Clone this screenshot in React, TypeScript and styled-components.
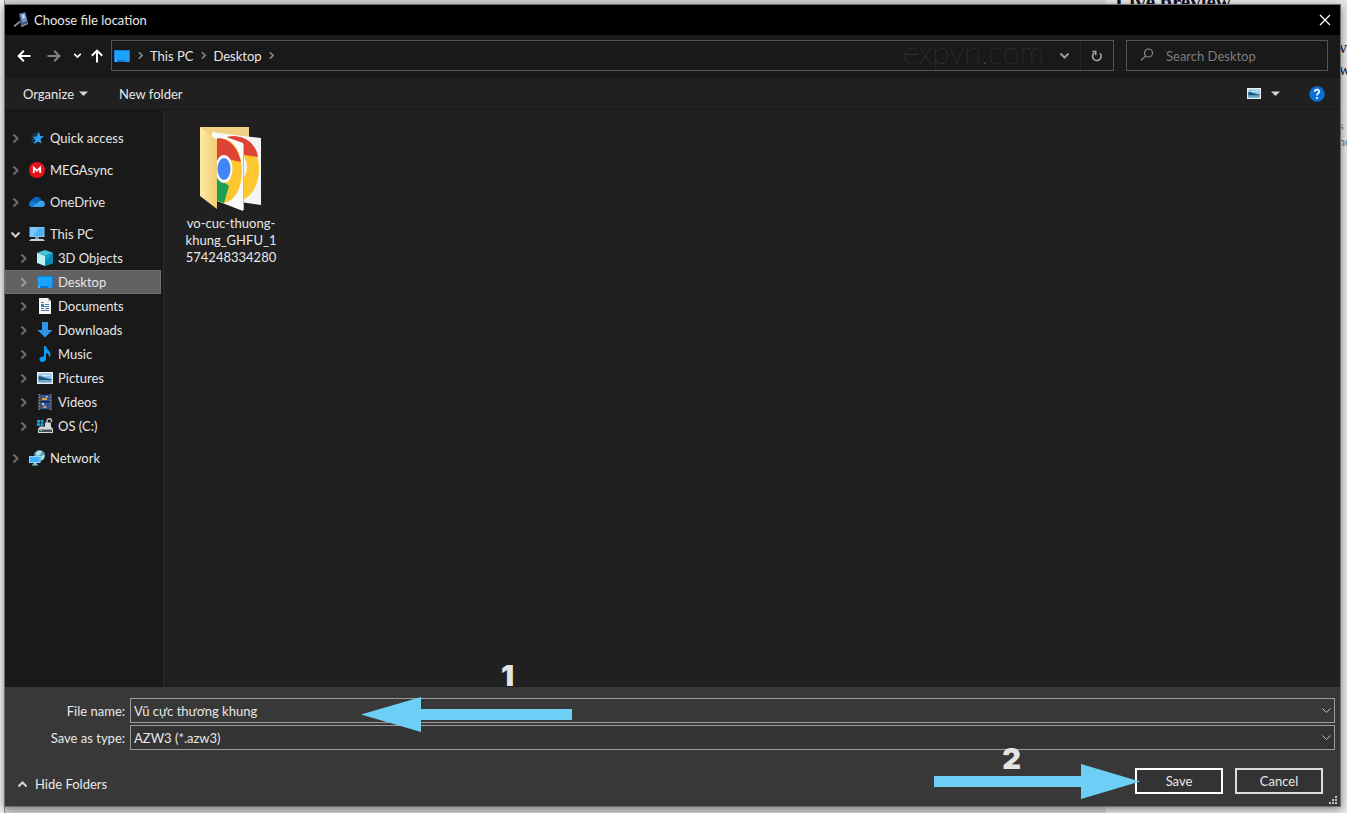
import React from "react";
import styled, { createGlobalStyle, css } from "styled-components";

const GlobalStyle = createGlobalStyle`
  *, *::before, *::after { box-sizing: border-box; }
  html, body { margin: 0; }
  body {
    background: #dedede;
    color: #e8e8e8;
    font: 13px/16px Lato, "Open Sans", sans-serif;
    overflow: hidden;
  }
  button, input, select { font: inherit; color: inherit; margin: 0; }
`;

const Page = styled.div`
  position: relative;
  display: flex;
  min-height: 100vh;
  padding: 4px 6px 6px 4px;
  background: linear-gradient(90deg, #eef0f2 0 4px, #8d8d8d 4px 5px, #d2d2d2 5px 1106px, #e6e6e6 1106px);
`;

const Behind = styled.div`
  position: absolute;
  inset: 0;
  overflow: hidden;
  color: #10101c;
  font-family: "Liberation Serif", serif;
`;

const BehindHeading = styled.strong`
  position: absolute;
  top: -10px;
  right: 116px;
  font: bold 21px/24px "Liberation Serif", serif;
`;

const BehindLine = styled.span<{ $top: number; $tone?: string; $small?: boolean }>`
  position: absolute;
  top: ${(p) => p.$top}px;
  left: calc(100% - 8px);
  color: ${(p) => p.$tone ?? "#10103a"};
  font-size: ${(p) => (p.$small ? 12 : 16)}px;
  line-height: 20px;
  white-space: nowrap;
`;

const Dialog = styled.main`
  position: relative;
  flex: 1;
  min-width: 0;
  display: flex;
  flex-direction: column;
  background: #202020;
  border: 1px solid #6e6e6e;
  box-shadow: 0 2px 8px rgba(0, 0, 0, 0.45);
`;

const TitleBar = styled.header`
  display: flex;
  align-items: center;
  gap: 5px;
  height: 30px;
  padding: 0 8px;
  background: #000;
`;

const Title = styled.h1`
  flex: 1;
  margin: 0;
  font-size: 13px;
  line-height: 16px;
  font-weight: 400;
`;

const IconButton = styled.button<{ $width?: number; $tone?: string }>`
  display: inline-flex;
  align-items: center;
  justify-content: center;
  width: ${(p) => p.$width ?? 24}px;
  height: 24px;
  padding: 0;
  border: 0;
  background: none;
  color: ${(p) => p.$tone ?? "#fff"};
`;

const NavBar = styled.nav`
  display: flex;
  align-items: center;
  height: 43px;
  padding: 0 12px 2px 7px;
  background: #191919;
`;

const AddressBar = styled.div`
  display: flex;
  align-items: center;
  flex: 1;
  height: 31px;
  margin-right: 12px;
  padding-left: 2px;
  border: 1px solid #535353;
`;

const Crumb = styled.a`
  color: #e8e8e8;
  text-decoration: none;
`;

const CrumbGap = styled.span`
  display: inline-flex;
  justify-content: center;
  width: 20px;
  color: #8a8a8a;
`;

const Watermark = styled.span`
  margin-left: auto;
  margin-right: 8px;
  padding-bottom: 8px;
  color: #4a4a4a;
  font-size: 31px;
  line-height: 28px;
  font-weight: 100;
`;

const RefreshSlot = styled.div`
  display: flex;
  align-items: center;
  height: 100%;
  margin-left: 4px;
  padding: 0 4px;
  border-left: 1px solid #242424;
`;

const SearchBox = styled.label`
  display: flex;
  align-items: center;
  gap: 12px;
  width: 202px;
  height: 31px;
  padding: 0 12px;
  border: 1px solid #535353;
  color: #8a8a8a;
`;

const SearchInput = styled.input`
  flex: 1;
  min-width: 0;
  padding: 0;
  border: 0;
  outline: 0;
  background: none;
  &::placeholder { color: #7c7c7c; opacity: 1; }
`;

const ToolBar = styled.div`
  display: flex;
  align-items: center;
  gap: 19px;
  height: 32px;
  padding: 0 14px 0 12px;
  border-bottom: 1px solid #181818;
  background: #202020;
`;

const ToolButton = styled.button`
  display: inline-flex;
  align-items: center;
  gap: 5px;
  height: 24px;
  padding: 0 6px;
  border: 0;
  background: none;
`;

const ToolEnd = styled.div`
  display: flex;
  align-items: center;
  gap: 22px;
  margin-left: auto;
`;

const Body = styled.div`
  display: flex;
  flex: 1;
`;

const Sidebar = styled.aside`
  width: 159px;
  padding: 16px 2px 0 0;
  border-right: 1px solid #2b2b2b;
  background: #191919;
`;

const Group = styled.ul`
  margin: 0 0 8px;
  padding: 0;
  list-style: none;
`;

const TreeRow = styled.li<{ $nested?: boolean; $selected?: boolean }>`
  display: flex;
  align-items: center;
  height: 24px;
  padding-left: ${(p) => (p.$nested ? 12 : 4)}px;
  color: #e6e6e6;
  ${(p) =>
    p.$selected &&
    css`
      background: #616161;
      box-shadow: inset 0 0 0 1px #707070;
    `}
`;

const Twisty = styled.button`
  display: inline-flex;
  align-items: center;
  justify-content: center;
  width: 12px;
  height: 16px;
  margin-right: 8px;
  padding: 0;
  border: 0;
  background: none;
`;

const RowLink = styled.a`
  display: flex;
  align-items: center;
  gap: 5px;
  color: inherit;
  text-decoration: none;
`;

const Files = styled.section`
  display: flex;
  flex: 1;
  flex-wrap: wrap;
  align-content: flex-start;
  padding: 15px;
`;

const FileTile = styled.figure`
  display: flex;
  flex-direction: column;
  align-items: center;
  width: 104px;
  margin: 0;
`;

const FileName = styled.figcaption`
  padding-top: 2px;
  line-height: 17px;
  text-align: center;
`;

const Footer = styled.footer`
  position: relative;
  padding: 11px 5px 10px 5px;
  background: #383838;
`;

const Fields = styled.div`
  display: grid;
  grid-template-columns: 115px 1fr;
  column-gap: 5px;
  row-gap: 2px;
  align-items: center;
`;

const FieldLabel = styled.label`
  text-align: right;
`;

const FieldBox = styled.div<{ $dark?: boolean }>`
  display: grid;
  grid-template-columns: 1fr 16px;
  align-items: center;
  height: 25px;
  border: 1px solid #9b9b9b;
  background: ${(p) => (p.$dark ? "#333" : "#383838")};
`;

const control = css`
  grid-row: 1;
  grid-column: 1 / -1;
  width: 100%;
  height: 23px;
  padding: 0 20px 0 3px;
  border: 0;
  border-radius: 0;
  outline: 0;
  background: none;
  appearance: none;
`;

const TextField = styled.input`${control}`;
const SelectField = styled.select`${control}`;

const FieldArrow = styled.span`
  grid-row: 1;
  grid-column: 2;
  display: flex;
  justify-content: center;
  pointer-events: none;
`;

const Actions = styled.div`
  display: flex;
  align-items: flex-start;
  gap: 12px;
  margin-top: 18px;
  padding: 0 12px 0 1px;
`;

const HideButton = styled(ToolButton)`
  gap: 7px;
  margin-right: auto;
  margin-top: 4px;
`;

const ActionButton = styled.button<{ $primary?: boolean }>`
  width: 88px;
  height: 26px;
  padding: 0;
  border: 2px solid ${(p) => (p.$primary ? "#fff" : "#dcdcdc")};
  background: #333;
`;

const Grip = styled.svg`
  position: absolute;
  right: 2px;
  bottom: 1px;
`;

const Arrow = styled.svg<{ $save?: boolean }>`
  position: absolute;
  pointer-events: none;
  ${(p) => (p.$save ? "right: 200px; top: 77px;" : "left: 356px; top: 10px;")}
`;

const Step = styled.span<{ $save?: boolean }>`
  position: absolute;
  color: #e4e4e4;
  font-family: Inter, Lato, sans-serif;
  font-size: 29px;
  line-height: 32px;
  font-weight: 900;
  pointer-events: none;
  ${(p) => (p.$save ? "right: 319px; top: 56px;" : "left: 496px; top: -27px;")}
`;

type Dir = "right" | "down" | "up";
const chevrons: Record<Dir, string> = {
  right: "M3.5 1.5 7.5 5.5 3.5 9.5",
  down: "M1.5 3.5 5.5 7.5 9.5 3.5",
  up: "M1.5 7.5 5.5 3.5 9.5 7.5",
};

function Chevron({ dir, size = 11, tone = "currentColor", weight = 2 }: { dir: Dir; size?: number; tone?: string; weight?: number }) {
  return (
    <svg width={size} height={size} viewBox="0 0 11 11" fill="none" stroke={tone} strokeWidth={weight} aria-hidden="true">
      <path d={chevrons[dir]} />
    </svg>
  );
}

const Caret = () => (
  <svg width="9" height="6" viewBox="0 0 9 6" aria-hidden="true">
    <path d="M0 .5h9L4.500 5z" fill="#d5d5d5" />
  </svg>
);

const BackArrow = ({ rotate = 0 }: { rotate?: number }) => (
  <svg width="14" height="14" viewBox="0 0 14 14" fill="none" stroke="currentColor" strokeWidth="2" aria-hidden="true">
    <path transform={`rotate(${rotate} 7 7)`} d="M13.500 7H2M6.800 1.800 1.600 7l5.200 5.200" />
  </svg>
);

type IconName =
  | "star" | "mega" | "cloud" | "pc" | "cube" | "desktop" | "doc" | "down"
  | "music" | "picture" | "video" | "drive" | "network";

const drawings: Record<IconName, React.ReactNode> = {
  star: (
    <>
      <path d="m10 1.500 1 4.500 4 .2-3.500 2.800 1 4.500-3.500-2-4.200 2.700L6.500 9.500 3.500 7l4-.5z" fill="#2ba4f5" />
      <path d="M4.500 4h4M2.500 6h4M3 9.500h3M2.500 12h3" stroke="#1b7cc4" strokeWidth=".7" />
    </>
  ),
  mega: (
    <>
      <circle cx="8" cy="8" r="8" fill="#e8121c" />
      <path d="M4.800 11V5.600L8 8.800l3.200-3.200V11" fill="none" stroke="#fff" strokeWidth="1.800" />
    </>
  ),
  cloud: (
    <>
      <path d="M3.800 12.500A3.700 3.700 0 0 1 3 5.400 5 5 0 0 1 12.200 6L9 10z" fill="#0a63b8" />
      <path d="M3 13a3 3 0 0 1-2.800-3.500C1 7.800 3 7.300 5 7.500l6 5z" fill="#1679d2" />
      <path d="M3 13 10.500 7A3.600 3.600 0 0 1 16 10c0 1.800-1.200 3-3 3z" fill="#35a3ee" />
    </>
  ),
  pc: (
    <>
      <path d="M.5 1h15v10H.5z" fill="#8ec9f3" />
      <path d="M1.300 1.800h13.400v8.400H1.300z" fill="#4fb0f6" />
      <path d="M1.300 1.800H10l-6 8.400H1.300z" fill="#7cc8fb" />
      <path d="M6 11h4v2H6z" fill="#83929d" />
      <path d="M2 13h12l2 2H0z" fill="#c3d2dc" />
    </>
  ),
  cube: (
    <>
      <path d="m8 0 8 2.800L8 6 0 2.800z" fill="#43c5dc" />
      <path d="M0 2.800 8 6v10l-8-3z" fill="#b8f4f3" />
      <path d="M8 6l8-3.200V13l-8 3z" fill="#10a9cb" />
      <path d="m8 11 8-8v10l-8 3z" fill="#078db5" />
    </>
  ),
  desktop: (
    <>
      <path d="M0 2h16v12H0z" fill="#0878d4" />
      <path d="M.8 2.800h14.400v9.200H.8z" fill="#1ba1ff" />
      <path d="M1 13h2M11.500 13h1M13.500 13h1" stroke="#b5e1ff" />
    </>
  ),
  doc: (
    <>
      <path d="M2 0h9l3 3v13H2z" fill="#f3f5f6" />
      <path d="M11 0v3h3z" fill="#aab4ba" />
      <path d="M4 4.500h3M8 6.500h4M4 8.500h8M4 10.500h3M8.500 10.500h3.500M4 12.500h8" stroke="#547d99" />
      <path d="M4 6h3v2H4z" fill="#2491cf" />
    </>
  ),
  down: <path d="M5 0h6v8h4.500L8 15.500.5 8H5z" fill="#2e94e8" />,
  music: (
    <path d="M7 0h2c0 3.500 4.500 4.500 4.500 8.500 0 1.600-.8 2.700-1.500 3.500.8-3-1-4.700-3-5v5.500c0 2-1.500 3.500-3.700 3.500C3.700 16 2.500 15 2.500 13.500c0-2 2.200-3.300 4.500-2.800z" fill="#0b9dfc" />
  ),
  picture: (
    <>
      <path d="M0 2h16v12H0z" fill="#eceff2" />
      <path d="M1.500 3.500h13v9h-13z" fill="#8ec5ed" />
      <path d="M1.500 6.500c3-1 4 1.500 13 2.500v1.500h-13z" fill="#1f5578" />
      <path d="M1.500 10h13v2.500h-13z" fill="#6ba7c9" />
      <path d="M5 5.500h8" stroke="#dceffc" />
    </>
  ),
  video: (
    <>
      <path d="M1 0h14v16H1z" fill="#4c4c4c" />
      <path d="M4 0h8v16H4z" fill="#162538" />
      <path d="M4 1h8v6H4zM4 8.500h8V15H4z" fill="#2e55a5" />
      <path d="M5 4h3l2-1v3H5zM6 13l2-2 2 3H6z" fill="#c9a050" />
      <path d="M9 2h2v1H9zM5 9h2v2H5z" fill="#a9d9ff" />
      <path d="M2.500 0v16M13.500 0v16" stroke="#8c8c8c" strokeDasharray="1 2" />
    </>
  ),
  drive: (
    <>
      <path d="M0 2h3v2.500H0zM3.600 2h3v2.500h-3zM0 5.200h3v2.500H0zM3.600 5.200h3v2.500h-3z" fill="#16adef" />
      <path d="M3 8.500h11L16 11v4H1v-4z" fill="#d5d8da" />
      <path d="M2 11.500h13V14H2z" fill="#4d5254" />
      <path d="M3 12h2v1H3z" fill="#50e078" />
      <path d="M10 5V3c0-3 4.500-3 4.500 0v1" fill="none" stroke="#bfc4c8" strokeWidth="1.400" />
      <path d="M8 4.500h6V9H8z" fill="#d3d8db" />
    </>
  ),
  network: (
    <>
      <circle cx="10.500" cy="5.500" r="5.500" fill="#4f9fc2" />
      <path d="M7 2.500C9 .5 12 .5 13 1.500L11 5 7.500 6zM12 6l3.500-1c.3 3-1.500 4.500-3 5.500z" fill="#b9e1e7" />
      <path d="M0 6h11.500v7H0z" fill="#a8dcff" />
      <path d="M.8 6.800h9.900v5.400H.8z" fill="#3bb0fb" />
      <path d="M4.500 13h3v1.500H9v1H3v-1h1.500z" fill="#9bc9e0" />
    </>
  ),
};

const Icon = ({ name, size = 16 }: { name: IconName; size?: number }) => (
  <svg width={size} height={size} viewBox="0 0 16 16" aria-hidden="true">{drawings[name]}</svg>
);

const AppIcon = () => (
  <svg width="16" height="16" viewBox="0 0 16 16" aria-hidden="true">
    <path d="M6 1.500 12.500 0 15 11l-7 3z" fill="#3d5595" />
    <path d="M7 2 12 1l2 8-5 1.500z" fill="#7898c6" />
    <path d="m9 3 2-.5 1 3-2 1z" fill="#d9e4ed" />
    <path d="m8 14 7-3v1l-6.500 3z" fill="#b6bdc6" />
    <path d="m1 14.500 6-5" stroke="#85868a" strokeWidth="2" />
  </svg>
);

const FolderArt = () => (
  <svg width="64" height="88" viewBox="0 0 64 88" role="img" aria-label="Folder">
    <defs>
      <linearGradient id="flap" x1="0" x2="1">
        <stop offset="0" stopColor="#ffe9a8" />
        <stop offset="1" stopColor="#f2ce72" />
      </linearGradient>
      <clipPath id="backSheet"><path d="M28 10 62 14v67L28 74z" /></clipPath>
      <clipPath id="frontSheet"><path d="M18 10 44 18v68L18 76z" /></clipPath>
    </defs>
    <path d="M1 2h49v69H1z" fill="#f0d082" />
    <path d="M13 7 62 13v67L13 73z" fill="#f4f4f4" />
    <g clipPath="url(#backSheet)">
      <ellipse cx="40" cy="44" rx="20" ry="31" fill="#fdc72f" />
      <path d="M28 12C42 8 57 17 59 32L40 29z" fill="#de4436" />
      <ellipse cx="40" cy="42" rx="8" ry="13" fill="#f4f4f4" />
      <ellipse cx="38" cy="42" rx="7" ry="10" fill="#4285f4" />
    </g>
    <path d="M13 7 44 18v68L13 74z" fill="#fafafa" />
    <path d="M44.500 19v66" stroke="#bcbcbc" />
    <g clipPath="url(#frontSheet)">
      <ellipse cx="24" cy="46" rx="19" ry="32" fill="#fdc72f" />
      <path d="M24 46 5 18C24 6 38 18 42 37L24 33z" fill="#de4436" />
      <path d="M3 40 18 52l12 9-5 17C8 74 2 60 3 40z" fill="#1a9f55" />
      <ellipse cx="25" cy="44" rx="8.500" ry="14" fill="#fafafa" />
      <ellipse cx="25" cy="44" rx="6.500" ry="11" fill="#4285f4" />
    </g>
    <path d="M1 2 18 15v69L1 71z" fill="url(#flap)" />
  </svg>
);

interface Place { name: string; icon: IconName; open?: boolean; children?: Place[] }

const places: Place[] = [
  { name: "Quick access", icon: "star" },
  { name: "MEGAsync", icon: "mega" },
  { name: "OneDrive", icon: "cloud" },
  {
    name: "This PC",
    icon: "pc",
    open: true,
    children: [
      { name: "3D Objects", icon: "cube" },
      { name: "Desktop", icon: "desktop" },
      { name: "Documents", icon: "doc" },
      { name: "Downloads", icon: "down" },
      { name: "Music", icon: "music" },
      { name: "Pictures", icon: "picture" },
      { name: "Videos", icon: "video" },
      { name: "OS (C:)", icon: "drive" },
    ],
  },
  { name: "Network", icon: "network" },
];

function PlaceRow({ place, nested }: { place: Place; nested?: boolean }) {
  const selected = nested && place.name === "Desktop";
  return (
    <TreeRow $nested={nested} $selected={selected}>
      <Twisty aria-label={`Expand ${place.name}`}>
        <Chevron dir={place.open ? "down" : "right"} tone={place.open ? "#d0d0d0" : selected ? "#9a9a9a" : "#6f6f6f"} />
      </Twisty>
      <RowLink href="#"><Icon name={place.icon} />{place.name}</RowLink>
    </TreeRow>
  );
}

export default function App() {
  return (
    <>
      <GlobalStyle />
      <Page>
        <Behind aria-hidden="true">
          <BehindHeading>Live preview</BehindHeading>
          <BehindLine $top={38}>v</BehindLine>
          <BehindLine $top={60}>w</BehindLine>
          <BehindLine $top={116} $small $tone="#a0714c">s f</BehindLine>
          <BehindLine $top={132} $small $tone="#70707a">no</BehindLine>
        </Behind>
        <Dialog>
          <TitleBar>
            <AppIcon />
            <Title>Choose file location</Title>
            <IconButton aria-label="Close" $width={14}>
              <svg width="12" height="12" viewBox="0 0 12 12" stroke="#fff" strokeWidth="1.300" aria-hidden="true">
                <path d="m1 1 10 10M11 1 1 11" />
              </svg>
            </IconButton>
          </TitleBar>

          <NavBar aria-label="Location">
            <IconButton aria-label="Back"><BackArrow /></IconButton>
            <IconButton aria-label="Forward" $width={36} $tone="#838383"><BackArrow rotate={180} /></IconButton>
            <IconButton aria-label="Recent locations" $width={11}><Chevron dir="down" size={9} /></IconButton>
            <IconButton aria-label="Up" $width={28}><BackArrow rotate={90} /></IconButton>
            <AddressBar>
              <Icon name="desktop" />
              <CrumbGap><Chevron dir="right" size={9} /></CrumbGap>
              <Crumb href="#">This PC</Crumb>
              <CrumbGap><Chevron dir="right" size={9} /></CrumbGap>
              <Crumb href="#">Desktop</Crumb>
              <CrumbGap><Chevron dir="right" size={9} /></CrumbGap>
              <Watermark>expvn.com</Watermark>
              <IconButton aria-label="Previous locations" $tone="#9b9b9b"><Chevron dir="down" /></IconButton>
              <RefreshSlot>
                <IconButton aria-label="Refresh" $tone="#a5a5a5">
                  <svg width="12" height="12" viewBox="0 0 12 12" fill="none" stroke="currentColor" strokeWidth="1.600" aria-hidden="true">
                    <path d="M3.200 2.800A4.300 4.300 0 1 0 9 3.200M1.500 1.500h3.200v3.700" />
                  </svg>
                </IconButton>
              </RefreshSlot>
            </AddressBar>
            <SearchBox>
              <svg width="15" height="15" viewBox="0 0 15 15" fill="none" stroke="currentColor" strokeWidth="1.200" aria-hidden="true">
                <circle cx="9.500" cy="5" r="4" />
                <path d="M6.600 7.900 2 12.500" />
              </svg>
              <SearchInput type="search" aria-label="Search Desktop" placeholder="Search Desktop" />
            </SearchBox>
          </NavBar>

          <ToolBar>
            <ToolButton>Organize <Caret /></ToolButton>
            <ToolButton>New folder</ToolButton>
            <ToolEnd>
              <ToolButton aria-label="Change view">
                <svg width="14" height="11" viewBox="0 2 16 12" preserveAspectRatio="none" aria-hidden="true">{drawings.picture}</svg>
                <span />
                <Caret />
              </ToolButton>
              <IconButton aria-label="Help" $width={18}>
                <svg width="16" height="16" viewBox="0 0 16 16" aria-hidden="true">
                  <circle cx="8" cy="8" r="7.700" fill="#0a6fd6" />
                  <path d="M5.700 5.800c.1-2.800 4.600-2.700 4.600-.2C10.300 7.200 8 7.300 8 9.500" fill="none" stroke="#fff" strokeWidth="1.700" />
                  <circle cx="8" cy="12" r="1.100" fill="#fff" />
                </svg>
              </IconButton>
            </ToolEnd>
          </ToolBar>

          <Body>
            <Sidebar>
              {places.map((place) => (
                <Group key={place.name}>
                  <PlaceRow place={place} />
                  {place.children?.map((child) => <PlaceRow key={child.name} place={child} nested />)}
                </Group>
              ))}
            </Sidebar>
            <Files>
              <FileTile>
                <FolderArt />
                <FileName>vo-cuc-thuong-<br />khung_GHFU_1<br />574248334280</FileName>
              </FileTile>
            </Files>
          </Body>

          <Footer>
            <Fields>
              <FieldLabel htmlFor="file-name">File name:</FieldLabel>
              <FieldBox>
                <TextField id="file-name" type="text" defaultValue="Vũ cực thương khung" />
                <FieldArrow><Chevron dir="down" tone="#c0c0c0" weight={1} /></FieldArrow>
              </FieldBox>
              <FieldLabel htmlFor="file-type">Save as type:</FieldLabel>
              <FieldBox $dark>
                <SelectField id="file-type"><option>AZW3 (*.azw3)</option></SelectField>
                <FieldArrow><Chevron dir="down" tone="#c0c0c0" weight={1} /></FieldArrow>
              </FieldBox>
            </Fields>
            <Actions>
              <HideButton><Chevron dir="up" tone="#d8d8d8" />Hide Folders</HideButton>
              <ActionButton $primary>Save</ActionButton>
              <ActionButton>Cancel</ActionButton>
            </Actions>
            <Grip width="9" height="9" viewBox="0 0 9 9" fill="#c4c4c4" aria-hidden="true">
              <path d="M6 0h2v2H6zM3 3h2v2H3zM6 3h2v2H6zM0 6h2v2H0zM3 6h2v2H3zM6 6h2v2H6z" />
            </Grip>
            <Step>1</Step>
            <Arrow width="211" height="35" viewBox="0 0 211 35" aria-hidden="true">
              <path d="M0 17.500 60 0v12h151v11H60v12z" fill="#6ecff6" />
            </Arrow>
            <Step $save>2</Step>
            <Arrow $save width="206" height="35" viewBox="0 0 206 35" aria-hidden="true">
              <path d="M206 17.500 147 0v12H0v11h147v12z" fill="#6ecff6" />
            </Arrow>
          </Footer>
        </Dialog>
      </Page>
    </>
  );
}
